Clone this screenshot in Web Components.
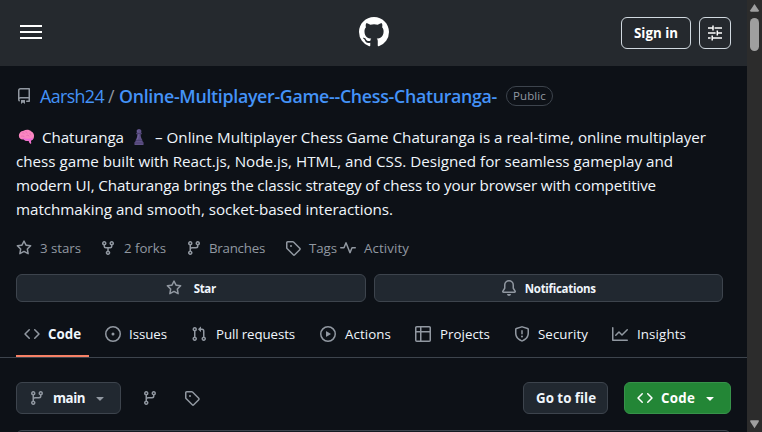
<!DOCTYPE html>
<html lang="en">
<head>
<meta charset="utf-8">
<title>Aarsh24/Online-Multiplayer-Game--Chess-Chaturanga-</title>
<style>
html,body{margin:0;height:100%;overflow:hidden;background:#0d1117}
body{font-family:"Open Sans","Noto Sans",sans-serif}
</style>
</head>
<body>
<repo-page></repo-page>
<script>
const ICONS = {
 repo:'<path d="M2 2.5A2.5 2.5 0 0 1 4.5 0h8.75a.75.75 0 0 1 .75.75v12.5a.75.75 0 0 1-.75.75h-2.5a.75.75 0 0 1 0-1.5h1.75v-2h-8a1 1 0 0 0-.714 1.7.75.75 0 1 1-1.072 1.05A2.495 2.495 0 0 1 2 11.5Zm10.5-1h-8a1 1 0 0 0-1 1v6.708A2.486 2.486 0 0 1 4.5 9h8ZM5 12.25a.25.25 0 0 1 .25-.25h3.5a.25.25 0 0 1 .25.25v3.25a.25.25 0 0 1-.4.2l-1.45-1.087a.249.249 0 0 0-.3 0L5.4 15.7a.25.25 0 0 1-.4-.2Z"/>',
 github:'<path d="M8 0c4.42 0 8 3.58 8 8a8.013 8.013 0 0 1-5.45 7.59c-.4.08-.55-.17-.55-.38 0-.27.01-1.13.01-2.2 0-.75-.25-1.23-.54-1.48 1.78-.2 3.65-.88 3.65-3.95 0-.88-.31-1.59-.82-2.15.08-.2.36-1.02-.08-2.12 0 0-.67-.22-2.2.82-.64-.18-1.32-.27-2-.27-.68 0-1.36.09-2 .27-1.53-1.03-2.2-.82-2.2-.82-.44 1.1-.16 1.92-.08 2.12-.51.56-.82 1.28-.82 2.15 0 3.06 1.86 3.75 3.64 3.95-.23.2-.44.55-.51 1.07-.46.21-1.61.55-2.33-.66-.15-.24-.6-.83-1.23-.82-.67.01-.27.38.01.53.34.19.73.9.82 1.13.16.45.68 1.31 2.69.94 0 .67.01 1.3.01 1.49 0 .21-.15.45-.55.38A7.995 7.995 0 0 1 0 8c0-4.42 3.58-8 8-8Z"/>',
 star:'<path d="M8 .25a.75.75 0 0 1 .673.418l1.882 3.815 4.21.612a.75.75 0 0 1 .416 1.279l-3.046 2.97.719 4.192a.751.751 0 0 1-1.088.791L8 12.347l-3.766 1.98a.75.75 0 0 1-1.088-.79l.72-4.194L.818 6.374a.75.75 0 0 1 .416-1.28l4.21-.611L7.327.668A.75.75 0 0 1 8 .25Zm0 2.445L6.615 5.5a.75.75 0 0 1-.564.41l-3.097.45 2.24 2.184a.75.75 0 0 1 .216.664l-.528 3.084 2.769-1.456a.75.75 0 0 1 .698 0l2.77 1.456-.53-3.084a.75.75 0 0 1 .216-.664l2.24-2.183-3.096-.45a.75.75 0 0 1-.564-.41L8 2.694Z"/>',
 fork:'<path d="M5 5.372v.878c0 .414.336.75.75.75h4.5a.75.75 0 0 0 .75-.75v-.878a2.25 2.25 0 1 1 1.5 0v.878a2.25 2.25 0 0 1-2.25 2.25h-1.5v2.128a2.251 2.251 0 1 1-1.5 0V8.5h-1.5A2.25 2.25 0 0 1 3.5 6.25v-.878a2.25 2.25 0 1 1 1.5 0ZM5 3.25a.75.75 0 1 0-1.5 0 .75.75 0 0 0 1.5 0Zm6.75.75a.75.75 0 1 0 0-1.5.75.75 0 0 0 0 1.5Zm-3 8.75a.75.75 0 1 0-1.5 0 .75.75 0 0 0 1.5 0Z"/>',
 branch:'<path d="M9.5 3.25a2.25 2.25 0 1 1 3 2.122V6A2.5 2.5 0 0 1 10 8.5H6a1 1 0 0 0-1 1v1.128a2.251 2.251 0 1 1-1.5 0V5.372a2.25 2.25 0 1 1 1.5 0v1.836A2.493 2.493 0 0 1 6 7h4a1 1 0 0 0 1-1v-.628A2.25 2.25 0 0 1 9.5 3.25Zm-6 0a.75.75 0 1 0 1.5 0 .75.75 0 0 0-1.5 0Zm8.25-.75a.75.75 0 1 0 0 1.5.75.75 0 0 0 0-1.5ZM4.25 12a.75.75 0 1 0 0 1.5.75.75 0 0 0 0-1.5Z"/>',
 tag:'<path d="M1 7.775V2.75C1 1.784 1.784 1 2.75 1h5.025c.464 0 .91.184 1.238.513l6.25 6.25a1.75 1.75 0 0 1 0 2.474l-5.026 5.026a1.75 1.75 0 0 1-2.474 0l-6.25-6.25A1.752 1.752 0 0 1 1 7.775Zm1.5 0c0 .066.026.13.073.177l6.25 6.25a.25.25 0 0 0 .354 0l5.025-5.025a.25.25 0 0 0 0-.354l-6.25-6.25a.25.25 0 0 0-.177-.073H2.75a.25.25 0 0 0-.25.25ZM6 5a1 1 0 1 1 0 2 1 1 0 0 1 0-2Z"/>',
 pulse:'<path d="M6 2c.306 0 .582.187.696.471L10 10.731l1.304-3.26A.751.751 0 0 1 12 7h3.25a.75.75 0 0 1 0 1.5h-2.742l-1.812 4.528a.751.751 0 0 1-1.392 0L6 4.77 4.696 8.03A.75.75 0 0 1 4 8.5H.75a.75.75 0 0 1 0-1.5h2.742l1.812-4.529A.751.751 0 0 1 6 2Z"/>',
 bell:'<path d="M8 16a2 2 0 0 0 1.985-1.75c.017-.137-.097-.25-.235-.25h-3.5c-.138 0-.252.113-.235.25A2 2 0 0 0 8 16ZM3 5a5 5 0 0 1 10 0v2.947c0 .05.015.098.042.139l1.703 2.555A1.519 1.519 0 0 1 13.482 13H2.518a1.516 1.516 0 0 1-1.263-2.36l1.703-2.554A.255.255 0 0 0 3 7.947Zm5-3.5A3.5 3.5 0 0 0 4.5 5v2.947c0 .346-.102.683-.294.97l-1.703 2.556a.017.017 0 0 0-.003.01l.001.006c0 .002.002.004.004.006l.006.004.007.001h10.964l.007-.001.006-.004.004-.006.001-.007a.017.017 0 0 0-.003-.01l-1.703-2.554a1.745 1.745 0 0 1-.294-.97V5A3.5 3.5 0 0 0 8 1.5Z"/>',
 code:'<path d="m11.28 3.22 4.25 4.25a.75.75 0 0 1 0 1.06l-4.25 4.25a.749.749 0 0 1-1.275-.326.749.749 0 0 1 .215-.734L13.94 8l-3.72-3.72a.749.749 0 0 1 .326-1.275.749.749 0 0 1 .734.215Zm-6.56 0a.751.751 0 0 1 1.042.018.751.751 0 0 1 .018 1.042L2.06 8l3.72 3.72a.749.749 0 0 1-.326 1.275.749.749 0 0 1-.734-.215L.47 8.53a.75.75 0 0 1 0-1.06Z"/>',
 issue:'<path d="M8 9.5a1.5 1.5 0 1 0 0-3 1.5 1.5 0 0 0 0 3Z"/><path d="M8 0a8 8 0 1 1 0 16A8 8 0 0 1 8 0ZM1.5 8a6.5 6.5 0 1 0 13 0 6.5 6.5 0 0 0-13 0Z"/>',
 pull:'<path d="M1.5 3.25a2.25 2.25 0 1 1 3 2.122v5.256a2.251 2.251 0 1 1-1.5 0V5.372A2.25 2.25 0 0 1 1.5 3.25Zm5.677-.177L9.573.677A.25.25 0 0 1 10 .854V2.5h1A2.5 2.5 0 0 1 13.5 5v5.628a2.251 2.251 0 1 1-1.5 0V5a1 1 0 0 0-1-1h-1v1.646a.25.25 0 0 1-.427.177L7.177 3.427a.25.25 0 0 1 0-.354ZM3.75 2.5a.75.75 0 1 0 0 1.5.75.75 0 0 0 0-1.5Zm0 9.5a.75.75 0 1 0 0 1.5.75.75 0 0 0 0-1.5Zm8.25.75a.75.75 0 1 0 1.5 0 .75.75 0 0 0-1.5 0Z"/>',
 play:'<path d="M8 0a8 8 0 1 1 0 16A8 8 0 0 1 8 0ZM1.5 8a6.5 6.5 0 1 0 13 0 6.5 6.5 0 0 0-13 0Zm4.879-2.773 4.264 2.559a.25.25 0 0 1 0 .428l-4.264 2.559A.25.25 0 0 1 6 10.559V5.442a.25.25 0 0 1 .379-.215Z"/>',
 table:'<path d="M0 1.75C0 .784.784 0 1.75 0h12.5C15.216 0 16 .784 16 1.75v12.5A1.75 1.75 0 0 1 14.25 16H1.75A1.75 1.75 0 0 1 0 14.25ZM6.5 6.5v8h7.75a.25.25 0 0 0 .25-.25V6.5Zm8-1.5V1.75a.25.25 0 0 0-.25-.25H6.5V5Zm-13 1.5v7.75c0 .138.112.25.25.25H5v-8ZM5 5V1.5H1.75a.25.25 0 0 0-.25.25V5Z"/>',
 shield:'<path d="M7.467.133a1.748 1.748 0 0 1 1.066 0l5.25 1.68A1.75 1.75 0 0 1 15 3.48V7c0 1.566-.32 3.182-1.303 4.682-.983 1.498-2.585 2.813-5.032 3.855a1.697 1.697 0 0 1-1.33 0c-2.447-1.042-4.049-2.357-5.032-3.855C1.32 10.182 1 8.566 1 7V3.48a1.75 1.75 0 0 1 1.217-1.667Zm.61 1.429a.25.25 0 0 0-.153 0l-5.25 1.68a.25.25 0 0 0-.174.238V7c0 1.358.275 2.666 1.057 3.86.784 1.194 2.121 2.34 4.366 3.297a.196.196 0 0 0 .154 0c2.245-.956 3.582-2.104 4.366-3.298C13.225 9.666 13.5 8.36 13.5 7V3.48a.251.251 0 0 0-.174-.237l-5.25-1.68ZM8.75 4.75v3a.75.75 0 0 1-1.5 0v-3a.75.75 0 0 1 1.5 0ZM9 10.5a1 1 0 1 1-2 0 1 1 0 0 1 2 0Z"/>',
 graph:'<path d="M1.5 1.75V13.5h13.75a.75.75 0 0 1 0 1.5H.75a.75.75 0 0 1-.75-.75V1.75a.75.75 0 0 1 1.5 0Zm14.28 2.53-5.25 5.25a.75.75 0 0 1-1.06 0L7 7.06 4.28 9.78a.751.751 0 0 1-1.042-.018.751.751 0 0 1-.018-1.042l3.25-3.25a.75.75 0 0 1 1.06 0L10 7.94l4.72-4.72a.751.751 0 0 1 1.042.018.751.751 0 0 1 .018 1.042Z"/>',
 caret:'<path d="m4.427 7.427 3.396 3.396a.25.25 0 0 0 .354 0l3.396-3.396A.25.25 0 0 0 11.396 7H4.604a.25.25 0 0 0-.177.427Z"/>',
 sliders:'<path d="M1 3.1h4.3M7.6 3.1H15M6 .6v5M1 8h7.6M11 8h4M10.3 5.5v5M1 12.9h2.6M6 12.9h9M5.2 10.4v5" fill="none" stroke="currentColor" stroke-width="1.5"/>',
 menu:'<path d="M0 2h22M0 8h22M0 14h22" fill="none" stroke="currentColor" stroke-width="2"/>',
 brain:'<path d="M1 7.5C.4 4.300 3 2 5.500 1.700 8 .2 11.500.5 13 2.200c2.400 1 3.600 3.600 2.900 6-.2 2-1.600 3.200-3.200 3.300l.6 2.500c0 .9-1.300.9-1.700 0L10.500 11.800C7.500 12.600 6 11 5.600 10.300 3 10.800 1.200 9.500 1 7.500Z" fill="#fa86c0"/><path d="M3.500 9.300c3-.1 5 .6 7.500.4 1.800-.2 3.200-.1 4.300-1.200-.4 2-1.500 2.900-2.800 3l.6 2.300c-.2.6-1 .6-1.300 0l-1.100-2.400C8 12 6.200 11 5.700 10.200 4.500 10.300 4 9.800 3.500 9.300Z" fill="#ee6ad8"/><path d="M4 4c1-.5 2-.2 2.500.6M8 2c-.3 1 .3 2 1.500 2.200M3 7.300c1.500-.8 3-.1 3.500.8M8.500 6.500c1-.6 2.200-.2 2.600.8M12.300 4c-.5.9-.1 1.700.9 2" stroke="#dd62ae" stroke-width=".6" fill="none"/>',
 pawn:'<path d="M8 0c1.500 0 2.400 1 2.400 2.200 0 .7-.3 1.200-.7 1.600h1v1.400H9.600c.1 2.400.6 3.900 1.500 5.200v1.400l1.400 1.800V16h-9v-2.400l1.400-1.800v-1.400c.9-1.300 1.400-2.800 1.500-5.200H5.300V3.800h1A2.200 2.200 0 0 1 5.600 2.200C5.600 1 6.500 0 8 0Z" fill="#5f5288"/><path d="M4.500 11.300h7M3.500 14h9M5.600 4.500h5" stroke="#463b68" stroke-width=".8"/><path d="M7 1.200c-.5.800-.3 1.500 0 2M7.300 5.500c0 2-.4 3.800-1 5" stroke="#7969a5" stroke-width=".8" fill="none"/>',
 up:'<path d="M8 3.600 3.500 10.500q-.8 1.500.8 1.500h7.400q1.600 0 .8-1.500Z"/>',
 down:'<path d="M8 12.400 3.500 5.500Q2.700 4 4.300 4h7.400q1.600 0 .8 1.500Z"/>'
};
function define(name, css, html, ready){
  customElements.define(name, class extends HTMLElement{
    connectedCallback(){
      if(this.shadowRoot) return;
      const root=this.attachShadow({mode:'open'});
      root.innerHTML='<style>'+css+'</style>'+(typeof html==='function'?html(this):html);
      if(ready) ready(this,root);
    }
  });
}
define('oct-icon',':host{display:block;flex:none;width:16px;height:16px;color:var(--icon,#9198a1)}svg{display:block;width:100%;height:100%;fill:currentColor;overflow:visible}',
  el=>`<svg viewBox="${el.getAttribute('box')||'0 0 16 16'}" aria-hidden="true">${ICONS[el.getAttribute('name')]}</svg>`);

/* A single line of text, tracked so that its advance equals the "w" attribute. */
define('fit-text',':host{display:block;flex:none;white-space:pre}span{display:inline-block}','<span><slot></slot></span>',(el,root)=>{
  const w=+el.getAttribute('w'), span=root.querySelector('span');
  el.style.width=w+'px';
  const natural=span.getBoundingClientRect().width;
  span.style.letterSpacing=((w-natural)/el.textContent.length)+'px';
});
define('site-header',`:host{display:flex;align-items:center;justify-content:space-between;height:66px;background:#25292e;padding:0 16px 0 20px;box-sizing:border-box;color:#fff}
 .l,.r{flex:1;display:flex}.r{justify-content:flex-end;gap:8px}.l oct-icon{width:22px;height:16px;margin-bottom:2px}
 .m{width:30px;height:30px;margin-bottom:2px;margin-right:4px}oct-icon{--icon:#fff}
 .b{display:flex;align-items:center;justify-content:center;box-sizing:border-box;height:32px;border:1px solid #d1d9e0;border-radius:6px;font-size:13.3px;font-weight:700}
 .s{width:70px}.p{width:32px}`,
 '<div class="l"><oct-icon name="menu" box="0 0 22 16"></oct-icon></div><oct-icon class="m" name="github"></oct-icon><div class="r"><div class="b s"><fit-text w="44">Sign in</fit-text></div><div class="b p"><oct-icon name="sliders"></oct-icon></div></div>');
define('repo-title',`:host{display:flex;align-items:center;height:24px;padding:0 16px;margin-top:18px;font-size:17.8px;line-height:24px;color:#4493f8}
 fit-text{margin-top:-1px}b{font-weight:600}.s{color:#9198a1;margin:-1px 4px 0}.n{margin-left:8px}
 .p{box-sizing:border-box;height:20px;width:47px;border:1px solid #3d444d;border-radius:10px;color:#9198a1;font-size:11.5px;line-height:20px;font-weight:500;margin-left:9px;padding-left:6px}`,
 '<oct-icon name="repo"></oct-icon><fit-text class="n" w="64">Aarsh24</fit-text><fit-text class="s" w="7">/</fit-text><b><fit-text w="378">Online-Multiplayer-Game--Chess-Chaturanga-</fit-text></b><div class="p"><fit-text w="33">Public</fit-text></div>');
define('repo-about',`:host{display:block;padding:0 16px;margin-top:17px;font-size:15.2px;line-height:24px;color:#f0f6fc}.a{display:flex;align-items:center;height:24px}
 .b{margin-left:2px;margin-right:1px}.c{margin:0 8px 0 7px}`,
 '<div class="a"><oct-icon class="b" name="brain"></oct-icon><fit-text style="margin-left:7px" w="82">Chaturanga</fit-text><oct-icon class="c" name="pawn"></oct-icon><fit-text w="551">– Online Multiplayer Chess Game Chaturanga is a real-time, online multiplayer</fit-text></div><fit-text w="657">chess game built with React.js, Node.js, HTML, and CSS. Designed for seamless gameplay and</fit-text><fit-text w="640">modern UI, Chaturanga brings the classic strategy of chess to your browser with competitive</fit-text><fit-text w="377">matchmaking and smooth, socket-based interactions.</fit-text>');
define('icon-label',':host{display:flex;align-items:center;gap:var(--gap,8px);flex:none}fit-text{margin-top:var(--drop,0)}',
 el=>`<oct-icon name="${el.getAttribute('icon')}"></oct-icon><fit-text w="${el.getAttribute('w')}">${el.textContent}</fit-text>`);
define('repo-stats',':host{display:flex;align-items:center;height:20px;margin-top:17px;padding:0 16px;font-size:13.3px;line-height:20px;color:#9198a1}',
 '<icon-label icon="star" w="41">3 stars</icon-label><icon-label style="margin-left:19px" icon="fork" w="42">2 forks</icon-label><icon-label style="margin-left:20px;--gap:7px" icon="branch" w="56">Branches</icon-label><icon-label style="margin-left:20px" icon="tag" w="28">Tags</icon-label><icon-label style="margin-left:3px" icon="pulse" w="45">Activity</icon-label>');
define('repo-actions',':host{display:flex;gap:8px;margin-top:16px;padding:0 24px 0 16px}div{flex:1;height:28px;box-sizing:border-box;border:1px solid #3d444d;border-radius:6px;background:#212830;display:flex;align-items:center;justify-content:center;font-size:11.5px;line-height:18px;font-weight:700;color:#f0f6fc}icon-label{--gap:12px;--drop:2px}.n{--gap:8px}',
 '<div><icon-label icon="star" w="22">Star</icon-label></div><div><icon-label class="n" icon="bell" w="71">Notifications</icon-label></div>');
define('repo-tabs',':host{display:flex;height:56px;box-sizing:border-box;border-bottom:1px solid #3d444d;padding:0 16px;font-size:13.3px;line-height:20px;color:#f0f6fc}icon-label{margin-top:6px;height:49px;box-sizing:border-box;padding:5px 8px 0;border-bottom:2px solid transparent}.on{border-color:#f78166;font-weight:700}',
 '<icon-label class="on" icon="code" w="33">Code</icon-label><icon-label style="margin-left:8px" icon="issue" w="38">Issues</icon-label><icon-label style="margin-left:8px;--gap:9px" icon="pull" w="79">Pull requests</icon-label><icon-label style="margin-left:9px;--gap:9px" icon="play" w="46">Actions</icon-label><icon-label style="margin-left:8px;--gap:9px" icon="table" w="50">Projects</icon-label><icon-label style="margin-left:8px;--gap:8px" icon="shield" w="50">Security</icon-label><icon-label style="margin-left:8px;--gap:9px" icon="graph" w="49">Insights</icon-label>');
define('file-bar',`:host{display:flex;align-items:center;height:32px;margin-top:24px;padding:0 16px;font-size:13.3px;line-height:20px;font-weight:700;color:#f0f6fc}
 .b{display:flex;align-items:center;box-sizing:border-box;height:32px;border:1px solid #3d444d;border-radius:6px;background:#212830;padding:0 12px}
 .g{margin-left:auto;width:85px}.c{margin-left:16px;width:107px;background:#238636;border-color:#37924a;--icon:#fff;color:#fff}.m{width:105px;padding-right:0}`,
 '<div class="b m"><icon-label icon="branch" w="32">main</icon-label><oct-icon style="margin-left:7px" name="caret"></oct-icon></div><oct-icon style="margin-left:21px" name="branch"></oct-icon><oct-icon style="margin-left:26px" name="tag"></oct-icon><div class="b g"><fit-text w="60">Go to file</fit-text></div><div class="b c"><icon-label icon="code" w="34">Code</icon-label><oct-icon style="margin-left:7px" name="caret"></oct-icon></div>');
define('file-list',':host{display:block;margin:16px 16px 0;height:40px;border:1px solid #3d444d;border-radius:6px;background:#151b23}','');
define('scroll-bar',':host{display:flex;flex-direction:column;align-items:center;width:15px;flex:none;height:432px;background:#2c2c2c;--icon:#9f9f9f}.t{width:9px;height:33px;border-radius:5px;background:#9f9f9f;margin-top:2px}.d{margin-top:auto}oct-icon{width:15px}',
 '<oct-icon name="up"></oct-icon><div class="t"></div><oct-icon class="d" name="down"></oct-icon>');
define('repo-page',':host{display:flex;width:762px;height:432px;overflow:hidden;background:#0d1117}main{width:747px;flex:none}',
 '<main><site-header></site-header><repo-title></repo-title><repo-about></repo-about><repo-stats></repo-stats><repo-actions></repo-actions><repo-tabs></repo-tabs><file-bar></file-bar><file-list></file-list></main><scroll-bar></scroll-bar>');
</script>
</body>
</html>
